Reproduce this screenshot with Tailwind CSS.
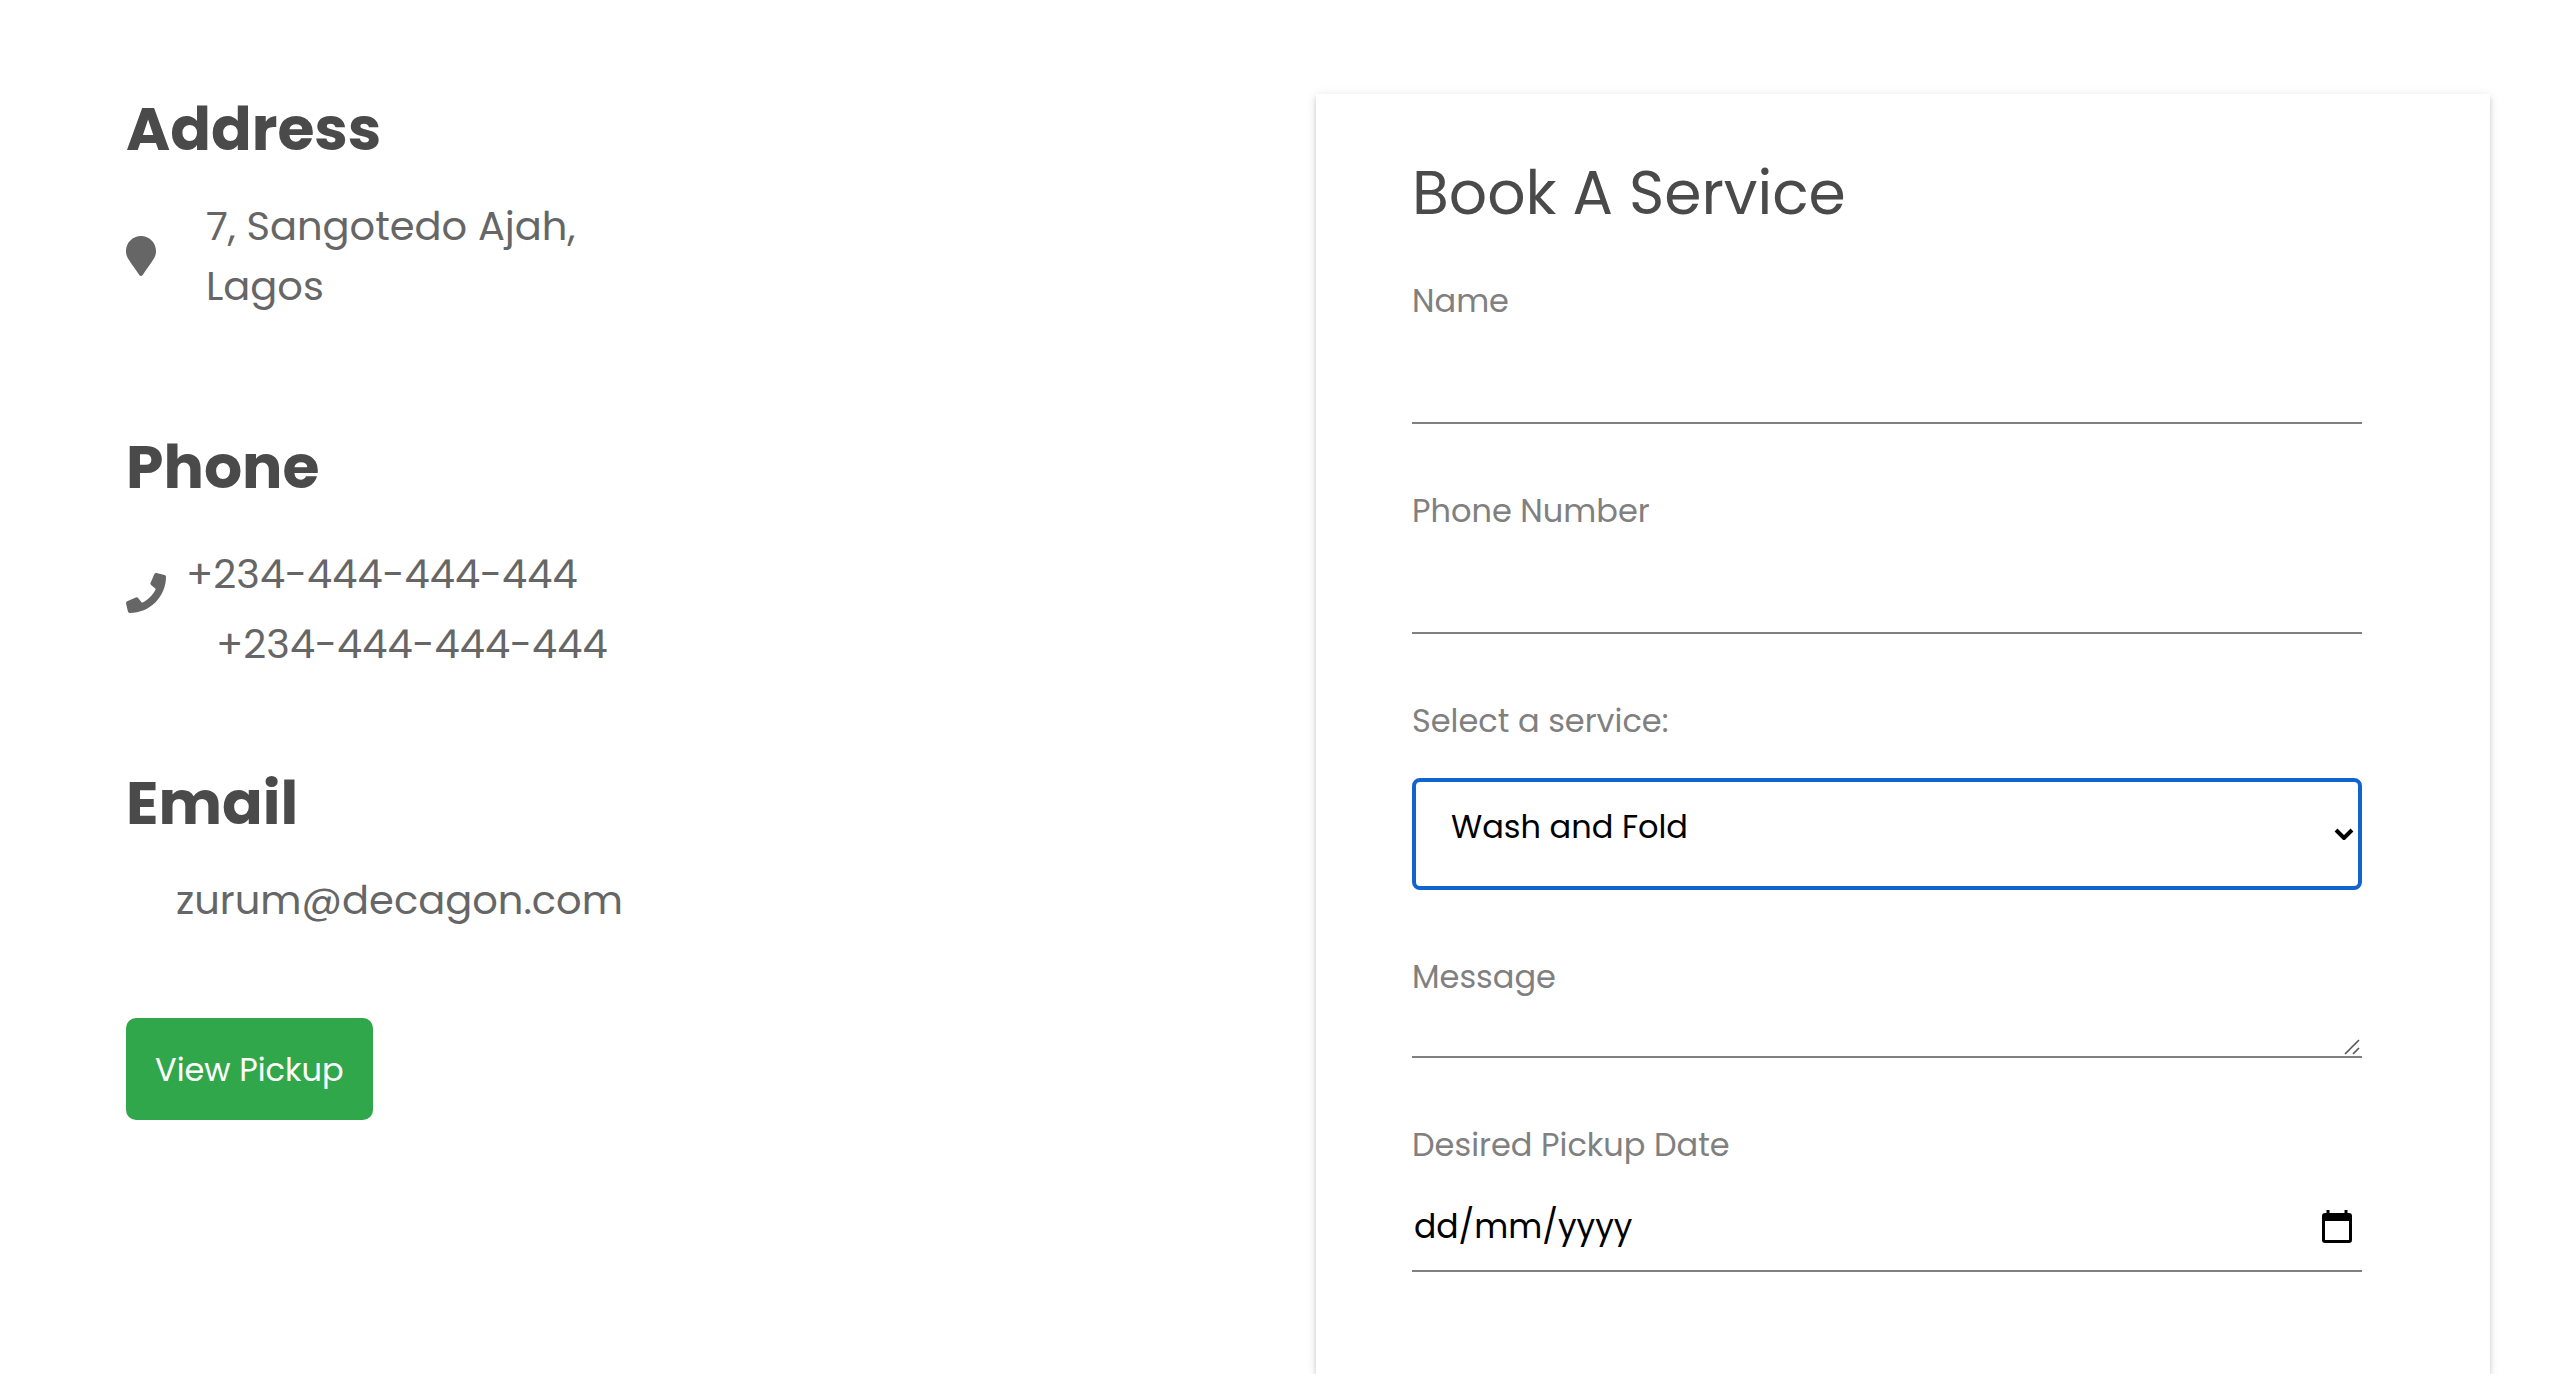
<!DOCTYPE html>
<html lang="en">
<head>
<meta charset="utf-8">
<meta name="viewport" content="width=device-width, initial-scale=1">
<title>Book A Service</title>
<script src="https://cdn.jsdelivr.net/npm/@tailwindcss/browser@4"></script>
</head>
<body class="bg-white font-[Poppins,Inter,sans-serif] text-[#666666]">
<main class="grid grid-cols-2 gap-4 pt-[94px] pr-[66px] pl-[126px]">

  <!-- Contact details -->
  <section class="flex flex-col items-start">
    <h2 class="text-[60px] leading-[70px] font-bold text-[#4a4a4a]">Address</h2>
    <div class="mt-8 flex items-center gap-[50px]">
      <svg class="h-10 w-[30px] shrink-0" viewBox="0 0 384 512" fill="currentColor" aria-hidden="true"><path d="M172.268 501.67C26.97 291.031 0 269.413 0 192 0 85.961 85.961 0 192 0s192 85.961 192 192c0 77.413-26.97 99.031-172.268 309.67-9.535 13.774-29.93 13.773-39.464 0z"/></svg>
      <address class="text-[40px] leading-[60px] not-italic">7, Sangotedo Ajah,<br>Lagos</address>
    </div>

    <h2 class="mt-[116px] text-[60px] leading-[70px] font-bold text-[#4a4a4a]">Phone</h2>
    <div class="mt-[37px] flex items-start gap-5">
      <svg class="mt-[34px] size-10 shrink-0" viewBox="0 0 512 512" fill="currentColor" aria-hidden="true"><path d="M493.4 24.6l-104-24c-11.3-2.6-22.9 3.3-27.5 13.9l-48 112c-4.200 9.800-1.400 21.300 6.900 28l60.600 49.600c-36 76.700-98.900 140.500-177.200 177.200l-49.600-60.600c-6.800-8.300-18.200-11.100-28-6.900l-112 48C3.900 366.500-2 378.100.6 389.400l24 104C27.100 504.200 36.700 512 48 512c256.100 0 464-207.500 464-464 0-11.200-7.700-20.900-18.600-23.400z"/></svg>
      <div class="flex flex-col text-[40px] leading-[70px]">
        <a href="tel:+234444444444">+234-444-444-444</a>
        <a href="tel:+234444444444" class="pl-[30px]">+234-444-444-444</a>
      </div>
    </div>

    <h2 class="mt-[89px] text-[60px] leading-[70px] font-bold text-[#4a4a4a]">Email</h2>
    <a href="mailto:zurum@decagon.com" class="mt-8 pl-[50px] text-[40px] leading-[60px]">zurum@decagon.com</a>

    <button type="button" class="mt-[88px] h-[102px] rounded-[10px] bg-[#31a74b] px-[29px] pt-0.5 text-[32px] leading-[48px] text-white">View Pickup</button>
  </section>

  <!-- Booking form -->
  <form class="flex flex-col bg-white pt-16 pr-32 pb-[102px] pl-24 shadow-[0_4px_4px_rgba(0,0,0,0.14),0_2px_10px_rgba(0,0,0,0.12),0_6px_2px_-4px_rgba(0,0,0,0.2)]">
    <h2 class="text-[60px] leading-[70px] text-[#4a4a4a]">Book A Service</h2>

    <div class="mt-[49px] flex flex-col gap-[63px] text-[32px] leading-[48px]">
      <div class="flex flex-col">
        <label for="name" class="text-[#808080]">Name</label>
        <input id="name" type="text" class="h-[99px] border-b-2 border-[#808080] text-black outline-none">
      </div>

      <div class="flex flex-col">
        <label for="phone" class="text-[#808080]">Phone Number</label>
        <input id="phone" type="tel" class="h-[99px] border-b-2 border-[#808080] text-black outline-none">
      </div>

      <div class="flex flex-col gap-[33px]">
        <label for="service" class="text-[#808080]">Select a service:</label>
        <div class="relative">
          <select id="service" class="block h-28 w-full appearance-none rounded-lg border-4 border-[#1064cf] bg-white pb-3.5 pl-[35px] text-black outline-none">
            <option>Wash and Fold</option>
          </select>
          <svg class="pointer-events-none absolute top-[50px] right-2 h-3 w-5" viewBox="0 0 20 12" fill="none" stroke="#000" stroke-width="4" aria-hidden="true"><path d="M2 2l8 8 8-8"/></svg>
        </div>
      </div>

      <div class="flex flex-col">
        <label for="message" class="text-[#808080]">Message</label>
        <div class="relative">
          <textarea id="message" rows="1" class="block h-[57px] w-full resize-none border-b-2 border-[#808080] text-black outline-none"></textarea>
          <svg class="pointer-events-none absolute right-0.5 bottom-[3px] size-4" viewBox="0 0 16 16" fill="none" stroke="#555" stroke-width="1.6" aria-hidden="true"><path d="M1 15L15 1M9 15l6-6"/></svg>
        </div>
      </div>

      <div class="flex flex-col">
        <label for="date" class="text-[#808080]">Desired Pickup Date</label>
        <div class="flex h-[103px] items-center border-b-2 border-[#808080] pt-3.5 pr-2.5">
          <input id="date" type="text" inputmode="numeric" placeholder="dd/mm/yyyy" class="min-w-0 flex-1 pl-0.5 text-[33px] text-black outline-none placeholder:text-black">
          <button type="button" aria-label="Open calendar">
            <svg class="h-[34px] w-[30px]" viewBox="0 0 30 34" aria-hidden="true"><path fill="#000" fill-rule="evenodd" d="M4.500 0h3v3h15V0h3v3H27a3 3 0 0 1 3 3v24a3 3 0 0 1-3 3H3a3 3 0 0 1-3-3V6a3 3 0 0 1 3-3h1.500zM3 11v19h24V11z"/></svg>
          </button>
        </div>
      </div>
    </div>
  </form>
</main>
</body>
</html>
